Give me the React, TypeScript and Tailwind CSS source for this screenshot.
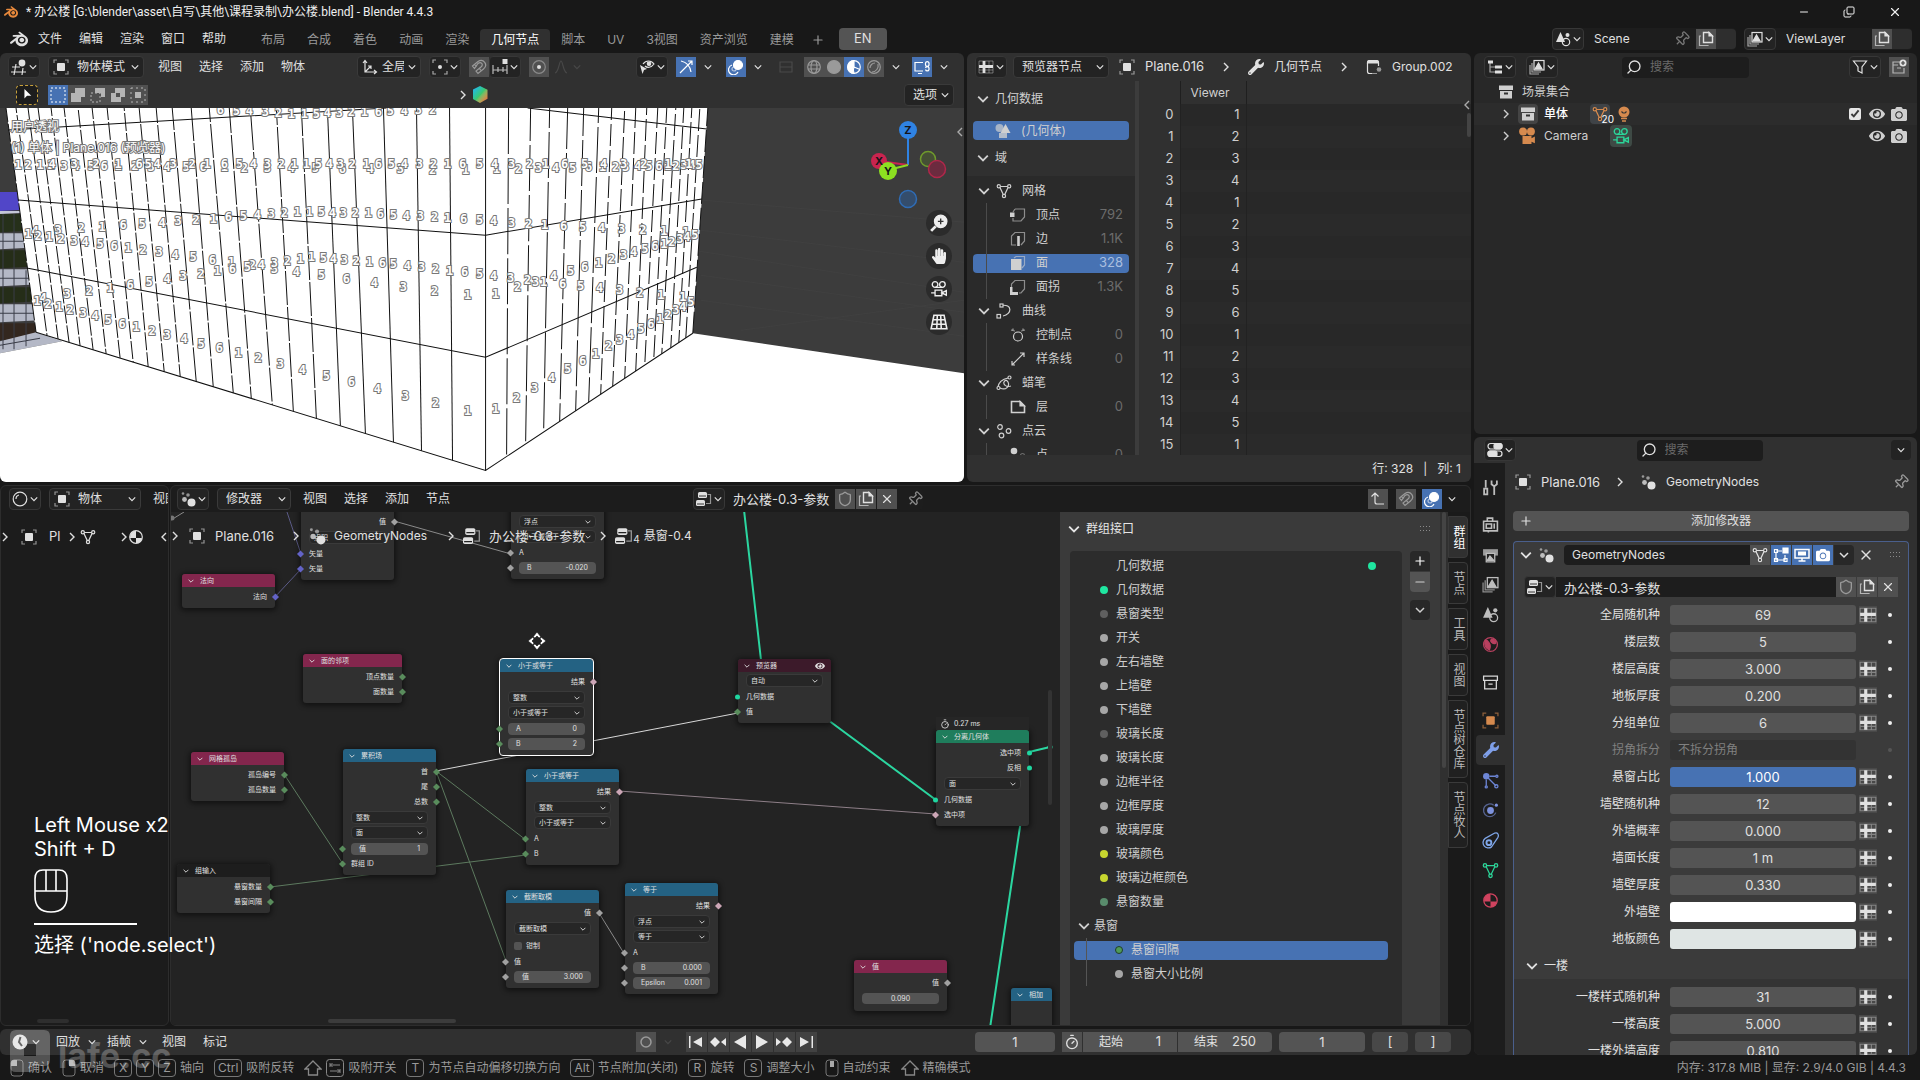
import type { ReactNode } from "react";
import { Copy, Minus, Pin, Plus, Search, Shield, Timer, X } from "lucide-react";
import { FaCamera, FaEye, FaHandPaper, FaWrench } from "react-icons/fa";
import { SiBlender } from "react-icons/si";

/* ---------- icons ---------- */

const shapes: Record<string, ReactNode> = {
  object: (
    <>
      <rect x="4" y="4" width="8" height="8" rx="1" fill="currentColor" stroke="none" />
      <path d="M1 4V1h3M12 1h3v3M15 12v3h-3M4 15H1v-3" opacity=".6" />
    </>
  ),
  view3d: (
    <>
      <circle cx="11" cy="4" r="3.4" fill="currentColor" stroke="none" />
      <path d="M1 8h8M0 13h15M5 5 3 16M12 9l-1 7" />
    </>
  ),
  sheet: (
    <>
      <path d="M1 2h14v12H1zM1 11h14M11 2v12" strokeWidth="1" opacity=".4" />
      <path d="M1 7.500h14M6 2v12" strokeWidth="2.8" />
    </>
  ),
  outliner: (
    <>
      <path d="M3 4v9h5M3 8h5" opacity=".7" />
      <path d="M1 1.500h5v3H1zM8 6.500h7v3H8zM8 11.500h7v3H8z" fill="currentColor" stroke="none" />
    </>
  ),
  props: (
    <>
      <rect x="1" y="1.500" width="14" height="5.500" rx="2.700" />
      <rect x="1" y="9" width="14" height="5.500" rx="2.700" />
      <rect x="7" y="1.500" width="8" height="5.500" rx="2" fill="currentColor" />
      <rect x="1" y="9" width="9" height="5.500" rx="2" fill="currentColor" />
    </>
  ),
  geonodes: (
    <g fill="currentColor" stroke="none">
      <circle cx="11.500" cy="11.500" r="4" />
      <circle cx="4.500" cy="8.500" r="2.400" opacity=".8" />
      <circle cx="8" cy="4" r="1.800" opacity=".6" />
      <circle cx="3" cy="2.500" r="1.300" opacity=".6" />
    </g>
  ),
  nodetree: (
    <>
      <rect x="2" y="1" width="9" height="6" rx="1.500" fill="currentColor" stroke="none" />
      <rect x="0" y="9" width="9" height="6" rx="1.500" fill="currentColor" stroke="none" />
      <path d="M11.500 3.500h3v9H10" opacity=".6" />
      <path d="M3 5h7M1 13h7" stroke="#222" strokeWidth=".9" />
    </>
  ),
  mesh: (
    <>
      <path d="M3.500 3.500h9L8 13z" />
      <g fill="#2b2b2b">
        <circle cx="2.800" cy="3.200" r="1.600" />
        <circle cx="13.200" cy="3.200" r="1.600" />
        <circle cx="8" cy="13" r="1.600" />
      </g>
    </>
  ),
  material: (
    <>
      <circle cx="8" cy="8" r="6.300" />
      <path d="M8 1.700A6.300 6.300 0 0 0 2 9h6zM8 9h6a6.300 6.300 0 0 1-6 5.300z" fill="currentColor" stroke="none" />
    </>
  ),
  axes: <path d="M3 2v11h11M3 13l6-6M1 4l2-2.500L5 4M12 11l2.500 2-2.500 2M6 7h3v3" />,
  pivot: (
    <>
      <circle cx="8" cy="8" r="2" fill="currentColor" stroke="none" />
      <path d="M1 4V1h3M12 1h3v3M15 12v3h-3M4 15H1v-3" opacity=".7" />
    </>
  ),
  magnet: <path d="M1.500 7 7 2.500C12.500-1 17.500 6 12.500 10L7 14.500 5 12l5-4c3-2.500 0-6-3-3.500L3.500 9.500zM3.500 5.500l2 2.500M8.500 9.500l2 2.500" />,
  dupe: (
    <>
      <path d="M5.500 1.500H11L14.500 5v6.500h-9z" strokeWidth="1.400" />
      <path d="M11 1.500V5h3.500z" fill="currentColor" />
      <path d="M3 5H1.500v9.500h8.500V14" opacity=".7" />
    </>
  ),
  snapto: (
    <>
      <path d="M1 6v9M6 8v5M11 8v5M15 6v9M1 11h14" opacity=".8" />
      <rect x="10.500" y="0" width="5" height="5" fill="currentColor" stroke="none" />
    </>
  ),
  propedit: (
    <>
      <circle cx="8" cy="8" r="6.300" opacity=".4" />
      <circle cx="8" cy="8" r="2" fill="currentColor" stroke="none" />
    </>
  ),
  falloff: <path d="M2 14C6 13 6 2 8 2s2 11 6 12" />,
  visible: (
    <>
      <path d="M4 5c3-4 8-4 11 0-3 4-7 4-9 2" />
      <circle cx="10" cy="4.800" r="1.700" fill="currentColor" />
      <path d="m1 6 7 4-3 1-1.500 4z" fill="currentColor" stroke="none" />
    </>
  ),
  gizmo: <path d="M3 2c5 1 9 5 10 11M2 14 14 2M10 2h4v4" />,
  overlay: (
    <>
      <circle cx="10" cy="6" r="4.500" fill="currentColor" />
      <path d="M4 6a5 5 0 1 0 6 7" />
      <circle cx="6" cy="10" r="2" opacity=".6" />
    </>
  ),
  xray: <path d="M2 3h12v10H2zM2 8h12" opacity=".15" />,
  wire: (
    <>
      <circle cx="8" cy="8" r="6.300" />
      <ellipse cx="8" cy="8" rx="3" ry="6.300" />
      <path d="M2 6h12M2 10h12" />
    </>
  ),
  solid: <circle cx="8" cy="8" r="6.500" fill="currentColor" />,
  preview: (
    <>
      <circle cx="8" cy="8" r="6.300" />
      <path d="M8 1.700A6.300 6.300 0 0 0 8 14.300c-1-2-1-4 0-6.300zM8 8l6 2.500" fill="currentColor" />
    </>
  ),
  render: (
    <>
      <circle cx="8" cy="8" r="6.300" />
      <path d="M4 9a5 5 0 0 1 5-5M12 5c1 4-2 8-6 8" />
    </>
  ),
  compositor: (
    <>
      <path d="M9 3.500H1v8.500h8M4 14.500h4" />
      <path d="M11.500 6V4a1.800 1.800 0 0 1 3.500 0v2a1.800 1.800 0 0 1-3.500 0M11.500 9a1.800 1.800 0 0 1 3.500 0v1.500a1.800 1.800 0 0 1-3.500 0" />
    </>
  ),
  scene: (
    <>
      <path d="M5.500 1 10 11H1z" fill="currentColor" stroke="none" />
      <circle cx="12.500" cy="4" r="2" fill="currentColor" stroke="none" />
      <circle cx="11" cy="11" r="3.700" />
    </>
  ),
  viewlayer: (
    <>
      <rect x="5" y="1.500" width="10" height="9.500" />
      <path d="m6 10 3.500-6 3.500 6z" fill="currentColor" />
      <path d="M3 4v9h9M1 6v9h9" opacity=".7" />
    </>
  ),
  newcol: (
    <>
      <path d="M9 3H2v11h11V9M2 6h5M6 9h4" opacity=".7" />
      <circle cx="12" cy="4" r="3.500" fill="currentColor" stroke="none" />
      <path d="M12 2v4M10 4h4" stroke="#444" />
    </>
  ),
  filter: <path d="M1.500 2h13L10 8v6l-4-2V8z" />,
  collection: (
    <>
      <path d="M1 1.500h14V6H1zM2 7h12v7.500H2z" fill="currentColor" stroke="none" />
      <path d="M6 9.500h4" stroke="#333" strokeWidth="2" />
    </>
  ),
  collectionLine: <path d="M1.500 2h13v4h-13zM2.500 6v8h11V6M6 9.500h4" />,
  moviecam: (
    <g fill="currentColor" stroke="none">
      <circle cx="4.500" cy="4" r="3.500" />
      <circle cx="11.500" cy="4" r="3.500" />
      <path d="M4 8h8v2l3-1.500v6L12 13v2H4z" />
    </g>
  ),
  camera: (
    <>
      <circle cx="4.500" cy="4" r="2.500" />
      <circle cx="11" cy="4" r="2.500" />
      <path d="M4.500 9h6v5h-6zM10.500 11.500l4-2v4zM1 11.500h3.500M4.500 6.500H11" />
    </>
  ),
  bulb: (
    <>
      <circle cx="8" cy="6" r="5.500" fill="currentColor" stroke="none" />
      <path d="M5 12.500h6M6 15h4" strokeWidth="1.600" />
      <path d="M5.500 5.500 7 7h2l1.500-1.500" stroke="#333" />
    </>
  ),
  geometry: (
    <g fill="currentColor" stroke="none">
      <circle cx="4.500" cy="5" r="4" opacity=".7" />
      <path d="m10.500 1 5 9h-10z" />
      <path d="M4 10h8v5H4z" opacity=".8" />
    </g>
  ),
  modout: (
    <>
      <path d="M6 14.500H3.500q-2 0-2-2V4q0-2.500 2-2.500h7q2 0 2 2V7" />
      <path d="M1.500 4q0-2.500 2-2.500h7q2 0 2 2.500z" fill="currentColor" />
      <circle cx="13" cy="10.500" r="2.300" fill="#999" stroke="none" />
      <path d="M6 14.500h5" opacity=".6" />
    </>
  ),
  vert: (
    <>
      <path d="M5 2h9.500v8L11 14H3v-3M3 5l2-3" opacity=".6" />
      <rect x="0" y="5.500" width="4.500" height="4.500" fill="currentColor" stroke="none" />
    </>
  ),
  edge: (
    <>
      <path d="M6 14H1.500V5L5 1.500h9.500v8.500L11 14" opacity=".6" />
      <path d="M8.500 5v10" strokeWidth="2.600" />
    </>
  ),
  face: (
    <>
      <path d="M4 3 6 1.500h8.500V10L12 13" opacity=".6" />
      <rect x="1" y="4" width="10.500" height="11" fill="currentColor" stroke="none" />
    </>
  ),
  facecorner: (
    <>
      <path d="M1.500 8V5L5 1.500h9.500V10L11 14H9" opacity=".6" />
      <path d="M1 8v6.500h7" strokeWidth="3" />
    </>
  ),
  curve: (
    <>
      <path d="M5 2.500c12-2 11 9 2 10.500" />
      <rect x="4" y="1" width="3" height="3" fill="#222" />
      <rect x="1" y="11.500" width="3.500" height="3.500" fill="#222" />
    </>
  ),
  ctrl: (
    <>
      <circle cx="8" cy="9.500" r="4.500" />
      <path d="m1 3 4 1M15 3l-4 1M3 1.500v2M13 1.500v2" opacity=".7" />
    </>
  ),
  spline: <path d="M2 14 14 2M10 2h4v4M2 10v4h3" />,
  gpencil: (
    <>
      <path d="M2 12c1-6 5-8 10-9M4 13c6 3 10-2 8-6s-5 0-4 2 4 3 7 2" />
      <circle cx="13.500" cy="2.500" r="1.500" fill="#222" />
      <circle cx="2.500" cy="13" r="1.500" fill="#222" />
    </>
  ),
  layer: (
    <>
      <path d="M1.500 2.500H10l4.500 4.500v6.500h-13z" strokeWidth="1.600" />
      <path d="M10 2.500V7h4.500z" fill="currentColor" />
    </>
  ),
  cloud: (
    <>
      <circle cx="4" cy="4" r="2.300" />
      <circle cx="12.500" cy="8" r="2.300" />
      <circle cx="5.500" cy="12.500" r="2.300" />
    </>
  ),
  point: (
    <>
      <circle cx="4" cy="4" r="3.300" fill="currentColor" stroke="none" />
      <circle cx="12.500" cy="8.500" r="2" opacity=".4" />
    </>
  ),
  tool: <path d="M3.500 1v7M2 9h3v5.500H2zM9 1.500v3.500l2.500 2 2.500-2V1.500M11.500 7v8" strokeWidth="1.700" />,
  renderprops: <path d="M1.500 5h13v9h-13zM5 5V2h5v3M4 7.500h5v4H4zM11.500 7v5M6 14v1.500" strokeWidth="1.500" />,
  output: (
    <>
      <path d="M1 3h14v6H1z" fill="currentColor" stroke="none" opacity=".8" />
      <path d="M4 7h8v8H4z" fill="#222" />
      <path d="m5 13.500 2.500-4 3.500 4z" fill="currentColor" />
    </>
  ),
  world: (
    <>
      <circle cx="8" cy="8" r="6.500" />
      <path d="M3 4c3 0 3 2 4 3s1 4 0 6c-3-1-5-4-4-9zM9 3c2 0 4 1 4 3s-3 1-4 0-1-2 0-3z" fill="currentColor" />
    </>
  ),
  particles: (
    <>
      <circle cx="4" cy="4" r="3" fill="currentColor" stroke="none" />
      <path d="M5 5l8 8M7 4h6M4 7v6" />
      <circle cx="14" cy="4" r="1" />
      <circle cx="4" cy="14" r="1" />
      <circle cx="13.500" cy="13.500" r="1.500" />
    </>
  ),
  physics: (
    <>
      <circle cx="8" cy="8" r="3.200" fill="currentColor" stroke="none" />
      <path d="M13 10a6 6 0 1 1-2-7" opacity=".6" />
      <circle cx="13.500" cy="3" r="1.500" fill="currentColor" stroke="none" />
    </>
  ),
  constraint: (
    <>
      <path d="M9 14A5 5 0 1 1 3 6l9-5c3-1 4 2 3 4z" />
      <circle cx="6.500" cy="10" r="2.300" strokeWidth="1.800" />
    </>
  ),
  cage: (
    <>
      <path d="M3 5v8h9V8M3 4h6" />
      <path d="M1.500 2.500h3v3h-3zM1.500 11.500h3v3h-3zM11 11.500h3v3h-3z" />
      <path d="M10 1h5v5h-5z" fill="currentColor" />
    </>
  ),
  monitor: (
    <>
      <path d="M1 2.500h14v8.500H1zM8 11v3M4.500 14h7" strokeWidth="1.500" />
      <path d="M4 4.500h8v4H4z" fill="currentColor" stroke="none" />
    </>
  ),
  zoom: (
    <>
      <circle cx="9.500" cy="6.500" r="5.500" fill="currentColor" />
      <path d="m5 11-4 4" strokeWidth="2.500" />
      <path d="M9.500 4v5M7 6.500h5" stroke="#333" />
    </>
  ),
  persp: <path d="M3.500 2h9L15 14H1zM2.500 6h11M2 10h12M6.500 2 6 14M9.500 2l.5 12" strokeWidth="1.400" />,
  parent: <path d="M5 2v9q0 2 2 2h7M1.500 5.500 5 2l3.500 3.500" />,
  clock: (
    <>
      <circle cx="8" cy="8" r="7.500" fill="currentColor" stroke="none" />
      <path d="M8.500 3 7 8l3 4" stroke="#333" strokeWidth="2" />
    </>
  ),
  sphere: (
    <>
      <circle cx="8" cy="8" r="6.800" />
      <path d="M4 8a4 4 0 0 1 3-4" />
    </>
  ),
};

function Ic({ n, className = "size-4" }: { n: string; className?: string }) {
  return (
    <svg viewBox="0 0 16 16" fill="none" stroke="currentColor" strokeWidth="1.2" className={`shrink-0 ${className}`}>
      {shapes[n]}
    </svg>
  );
}

function Chev({ className = "size-2" }: { className?: string }) {
  return (
    <svg viewBox="0 0 10 10" fill="none" stroke="currentColor" strokeWidth="1.5" className={`pointer-events-none shrink-0 ${className}`}>
      <path d="M1 3l4 4 4-4" />
    </svg>
  );
}

function Arrow() {
  return (
    <svg viewBox="0 0 8 12" fill="none" stroke="currentColor" strokeWidth="1.4" className="h-3 w-2 shrink-0">
      <path d="M2 2l4 4-4 4" />
    </svg>
  );
}

/* ---------- small controls ---------- */

function Btn({ label, on, dim, flat, children }: { label: string; on?: boolean; dim?: boolean; flat?: boolean; children: ReactNode }) {
  const tone = on ? "bg-[#4772b3] text-white" : flat ? "" : "bg-[#505050]";
  return (
    <button aria-label={label} className={`grid h-5 w-5 shrink-0 place-items-center ${tone} ${dim ? "text-[#9a9a9a]" : ""}`}>
      {children}
    </button>
  );
}

function Drop({ label, children }: { label: string; children: ReactNode }) {
  return (
    <button aria-label={label} className="flex h-[22px] shrink-0 items-center gap-0.5 rounded-sm border border-[#373737] bg-[#232323] px-0.5">
      {children}
      <Chev />
    </button>
  );
}

function Pick({ label, value, className, children }: { label: string; value: string; className?: string; children?: ReactNode }) {
  return (
    <label className={`flex h-[22px] shrink-0 items-center gap-1 rounded-sm border border-[#3a3a3a] bg-[#232323] pr-1 ${children ? "pl-1" : "pl-2"} ${className ?? ""}`}>
      {children}
      <select aria-label={label} className="min-w-0 flex-1 appearance-none bg-transparent outline-none">
        <option>{value}</option>
      </select>
      <Chev />
    </label>
  );
}

function Menus({ items }: { items: string[] }) {
  return (
    <nav className="flex shrink-0 items-center gap-[17px] whitespace-nowrap">
      {items.map((m) => (
        <button key={m}>{m}</button>
      ))}
    </nav>
  );
}

function DotGrip() {
  return (
    <svg viewBox="0 0 12 6" className="h-1.5 w-3" fill="#8a8a8a">
      {[0, 3, 6, 9].map((x) => (
        <g key={x}>
          <rect x={x} y="0" width="1" height="1" />
          <rect x={x} y="4" width="1" height="1" />
        </g>
      ))}
    </svg>
  );
}

/* ---------- top ---------- */

function TitleBar() {
  return (
    <header className="flex h-6 shrink-0 items-center gap-2 px-1 text-[#f0f0f0]">
      <SiBlender className="size-3.5 text-[#e98a3c]" />
      <span className="font-['Roboto','Noto_Sans_CJK_SC',sans-serif] text-xs whitespace-nowrap">
        * 办公楼 [G:\blender\asset\自写\其他\课程录制\办公楼.blend] - Blender 4.4.3
      </span>
      <div className="ml-auto flex items-center gap-[33px] pr-3.5">
        <button aria-label="最小化"><Minus className="size-3" /></button>
        <button aria-label="还原"><Copy className="size-3 -scale-x-100 rotate-180" /></button>
        <button aria-label="关闭"><X className="size-3.5" /></button>
      </div>
    </header>
  );
}

const tabs = ["布局", "合成", "着色", "动画", "渲染", "几何节点", "脚本", "UV", "3视图", "资产浏览", "建模"];

function TopBar() {
  return (
    <div className="flex h-[29px] shrink-0 items-center pr-2 pl-2.5">
      <SiBlender className="mr-2.5 size-[18px]" />
      <Menus items={["文件", "编辑", "渲染", "窗口", "帮助"]} />
      <div className="mb-[3px] ml-6 flex items-center self-end text-[#9a9a9a]">
        {tabs.map((t, i) => (
          <button
            key={i}
            className={`h-[21px] rounded-t px-[11px] whitespace-nowrap ${t === "几何节点" ? "bg-[#303030] text-white" : ""}`}
          >
            {t}
          </button>
        ))}
        <button aria-label="添加工作区" className="px-1.5"><Plus className="size-3.5" /></button>
      </div>
      <button className="ml-2 h-[22px] w-12 rounded bg-[#545454] text-[13px]">EN</button>
      <div className="ml-auto flex items-center gap-2">
        <div className="flex h-[22px] items-center rounded bg-[#1d1d1d]">
          <Drop label="浏览场景"><Ic n="scene" /></Drop>
          <input aria-label="场景" defaultValue="Scene" className="w-[90px] bg-transparent pl-2.5 outline-none" />
          <Pin className="mr-1.5 size-4 rotate-45 text-[#777]" />
          <Btn label="新建场景"><Ic n="dupe" /></Btn>
          <span className="h-5 w-5 rounded-r bg-[#2e2e2e]" />
        </div>
        <div className="flex h-[22px] items-center rounded bg-[#1d1d1d]">
          <Drop label="浏览视图层"><Ic n="viewlayer" /></Drop>
          <input aria-label="视图层" defaultValue="ViewLayer" className="w-[96px] bg-transparent pl-2.5 outline-none" />
          <Btn label="新建视图层"><Ic n="dupe" /></Btn>
          <span className="h-5 w-5 rounded-r bg-[#2e2e2e]" />
        </div>
      </div>
    </div>
  );
}

/* ---------- 3D viewport ---------- */

type Pt = [number, number];

function yAt(curve: Pt[], x: number) {
  for (let i = 1; i < curve.length; i++) {
    const [x0, y0] = curve[i - 1];
    const [x1, y1] = curve[i];
    if (x <= x1) return y0 + ((x - x0) * (y1 - y0)) / (x1 - x0);
  }
  return curve[curve.length - 1][1];
}

const lower = "12123456123456123456432112345612345612345";
const upper = "43216543216543211543216543216543216543211";

// face ids drawn over the mesh, one entry per floor row
const idRows: { ids: string; xs: number[]; curve: Pt[] }[] = [
  {
    ids: "65432115432165432",
    xs: [220, 236, 249, 265, 278, 291, 304, 316, 327, 339, 351, 364, 378, 390, 404, 418, 432],
    curve: [[220, 110], [300, 114], [432, 110]],
  },
  {
    ids: lower,
    xs: [18, 28, 40, 51, 64, 76, 91, 104, 118, 135, 151, 167, 186, 203, 224, 244, 267, 291, 315, 342, 370, 400, 432, 465, 496, 518, 538, 555, 572, 588, 602, 615, 625, 637, 648, 658, 667, 675, 683, 691, 698],
    curve: [[18, 165], [465, 170], [698, 165]],
  },
  {
    ids: upper,
    xs: [52, 74, 96, 118, 139, 148, 157, 173, 192, 207, 224, 239, 253, 267, 281, 294, 306, 318, 329, 340, 352, 366, 378, 391, 404, 419, 433, 447, 462, 479, 494, 511, 529, 545, 564, 584, 603, 623, 643, 667, 688],
    curve: [[52, 164], [688, 164]],
  },
  {
    ids: upper,
    xs: [35, 58, 81, 102, 123, 142, 162, 178, 196, 213, 228, 243, 257, 271, 284, 297, 309, 321, 332, 343, 355, 368, 380, 393, 406, 420, 434, 447, 463, 479, 493, 511, 528, 544, 563, 582, 601, 621, 642, 663, 685],
    curve: [[35, 231], [142, 224], [297, 212], [368, 213], [479, 220], [544, 225], [685, 232]],
  },
  {
    ids: lower,
    xs: [28, 38, 49, 61, 74, 85, 100, 114, 128, 143, 159, 175, 193, 212, 231, 252, 274, 296, 321, 346, 374, 403, 434, 467, 495, 517, 535, 553, 570, 584, 598, 611, 623, 633, 644, 654, 663, 671, 679, 686, 694],
    curve: [[28, 234], [128, 248], [231, 262], [346, 279], [467, 295], [495, 294], [570, 271], [633, 252], [694, 235]],
  },
  {
    ids: upper,
    xs: [43, 67, 89, 110, 130, 149, 167, 183, 201, 217, 232, 247, 261, 274, 287, 300, 311, 323, 333, 344, 356, 369, 382, 393, 407, 421, 435, 449, 464, 479, 493, 510, 527, 543, 562, 580, 599, 619, 639, 660, 682],
    curve: [[43, 298], [217, 271], [311, 257], [393, 264], [479, 274], [543, 282], [682, 297]],
  },
  {
    ids: lower,
    xs: [37, 48, 59, 70, 83, 95, 108, 122, 136, 152, 167, 184, 201, 219, 238, 258, 280, 302, 326, 351, 377, 405, 435, 467, 495, 516, 534, 551, 567, 582, 595, 608, 619, 630, 640, 650, 659, 667, 675, 682, 690],
    curve: [[37, 301], [136, 327], [238, 353], [351, 382], [467, 411], [495, 409], [551, 378], [608, 346], [640, 329], [690, 302]],
  },
];

const leftTop = [485, 449, 416, 383, 352, 327, 301, 276, 250, 229, 209, 191, 172, 156, 139, 124, 107, 92, 78, 64, 51, 38, 28, 16, 6];
const leftBottom = [485, 452, 421, 393, 365, 340, 316, 293, 272, 251, 233, 213, 196, 180, 164, 148, 133, 120, 106, 93, 80, 69, 58, 47, 36];
const rightTop = [508, 530, 549, 567, 583, 598, 611, 624, 635, 646, 657, 666, 675, 683, 691, 699, 707];
const rightBottom = [506, 525, 543, 559, 575, 588, 600, 612, 624, 635, 644, 653, 661, 670, 678, 685, 692];
const base: Pt[] = [[36, 332], [485, 470], [692, 333]];

const bands: [number, number, string][] = [
  [192, 211, "#5146c8"],
  [211, 214, "#c4c7d6"],
  [214, 232, "#26301a"],
  [233, 249, "#b4b8c6"],
  [250, 268, "#252d18"],
  [269, 286, "#b4b8c6"],
  [287, 303, "#252d18"],
  [304, 322, "#b4b8c6"],
  [323, 340, "#33271f"],
];

function Scene3D() {
  return (
    <svg viewBox="0 108 963 374" preserveAspectRatio="xMinYMin slice" className="absolute inset-0 size-full">
      <rect x="0" y="108" width="1200" height="500" fill="#3c3c3c" />
      <g stroke="#404040" strokeWidth="1">
        <path d="M692 250 963 292M700 300 963 336M700 230 963 262M740 330 963 300M700 200 963 222M700 275 963 312" />
      </g>
      {bands.map(([y0, y1, c]) => (
        <path key={y0} d={`M0 ${y0}H40V${y1 - 2}L0 ${y1}z`} fill={c} />
      ))}
      <path d="M0 341 40 331 62 341 0 353z" fill="#b4b8c6" />
      <path d="M3 214v135M14 214v135M26 270v76M0 241h26M0 278h30M0 313h34M0 345l40-7" stroke="#3a3d48" fill="none" />
      <path d="M0 353 62 341 36 332 692 333 1200 408V700H0z" fill="#fff" />
      <path d="M6 108H707L692 333 485 470 36 332z" fill="#fff" />
      <g stroke="#111" strokeWidth="1" fill="none">
        <path d="M8 130 386 108M527 108 706 129M18 200 485 235 701 199M28 268 485 357 696 267M36 332 485 470 692 333" />
        {leftTop.map((x, i) => (
          <path
            key={x}
            d={`M${x} 108L${leftBottom[i]} ${yAt(base, leftBottom[i])}`}
            strokeDasharray={i < 6 ? undefined : i < 13 ? "34 2" : "18 2"}
            strokeDashoffset={(i * 11) % 30}
          />
        ))}
        {rightTop.map((x, i) => (
          <path
            key={x}
            d={`M${x} 108L${rightBottom[i]} ${yAt(base, rightBottom[i])}`}
            strokeDasharray={i < 6 ? "46 4" : "22 4"}
            strokeDashoffset={(i * 13) % 34}
          />
        ))}
      </g>
      <g fill="#fff" stroke="#777" strokeWidth="2" paintOrder="stroke" className="font-['DejaVu_Sans_Mono',monospace] text-[12px] font-bold" textAnchor="middle">
        {idRows.map((r, k) =>
          r.xs.map((x, i) => (
            <text key={`${k}-${i}`} x={x} y={yAt(r.curve, x) + 4}>
              {r.ids[i]}
            </text>
          ))
        )}
      </g>
      <g fill="#fff" stroke="#777" strokeWidth="2" paintOrder="stroke" className="text-[12px]">
        <text x="11" y="131">用户透视</text>
        <text x="11" y="152">(1) 单体 | Plane.016 (预览器)</text>
      </g>
    </svg>
  );
}

function AxisGizmo() {
  return (
    <svg viewBox="0 0 90 100" className="h-[100px] w-[90px]">
      <path d="M50 55V20" stroke="#2f83e3" strokeWidth="2" />
      <path d="M50 55 21 51" stroke="#c9244f" strokeWidth="2" />
      <path d="M50 55 30 60" stroke="#8cd822" strokeWidth="2" />
      <circle cx="70" cy="49" r="7.500" fill="#454f35" stroke="#6f9a2c" strokeWidth="1.500" />
      <circle cx="79" cy="59" r="8.500" fill="#6c2b3f" stroke="#b0274a" strokeWidth="1.500" />
      <circle cx="50" cy="89" r="8.500" fill="#344d6c" stroke="#2f6cb5" strokeWidth="1.500" />
      <circle cx="21" cy="51" r="8" fill="#c9244f" />
      <circle cx="30" cy="61" r="9" fill="#8ce021" />
      <circle cx="50" cy="20" r="9" fill="#2f83e3" />
      <g className="text-[11px] font-bold" textAnchor="middle" fill="#15151a">
        <text x="50" y="24">Z</text>
        <text x="21" y="55">X</text>
        <text x="30" y="65">Y</text>
      </g>
    </svg>
  );
}

function Viewport() {
  const round = "grid size-[26px] place-items-center rounded-full bg-[#2b2b2b]";
  return (
    <section className="flex min-w-0 flex-1 flex-col overflow-hidden rounded-md bg-[#303030]">
      <div className="flex h-7 shrink-0 items-center px-2">
        <Drop label="编辑器类型"><Ic n="view3d" /></Drop>
        <Pick label="模式" value="物体模式" className="mr-3.5 ml-2 w-24"><Ic n="object" className="mr-1 size-4" /></Pick>
        <Menus items={["视图", "选择", "添加", "物体"]} />
        <div className="ml-[52px] flex items-center gap-2">
          <Pick label="坐标系" value="全局" className="w-16"><Ic n="axes" /></Pick>
          <Drop label="轴心点"><Ic n="pivot" /></Drop>
          <div className="flex items-center">
            <Btn label="吸附" dim><Ic n="magnet" /></Btn>
            <Drop label="吸附至"><Ic n="snapto" /></Drop>
          </div>
          <div className="flex items-center">
            <Btn label="衰减编辑"><Ic n="propedit" /></Btn>
            <span className="flex items-center gap-1 pl-1 text-[#484848]"><Ic n="falloff" /><Chev /></span>
          </div>
        </div>
        <div className="ml-auto flex items-center gap-2 pr-2">
          <div className="-mr-1 pr-1"><Drop label="可见性"><Ic n="visible" /></Drop></div>
          <div className="flex items-center gap-2"><Btn label="Gizmo" on><Ic n="gizmo" /></Btn><Chev /></div>
          <div className="ml-1.5 flex items-center gap-2"><Btn label="叠加层" on><Ic n="overlay" /></Btn><Chev /></div>
          <div className="ml-1.5 flex items-center"><Btn label="透视" flat><Ic n="xray" /></Btn></div>
          <div className="flex items-center">
            <Btn label="线框" dim><Ic n="wire" /></Btn>
            <Btn label="实体" dim><Ic n="solid" /></Btn>
            <Btn label="材质预览" on><Ic n="preview" /></Btn>
            <Btn label="渲染" dim><Ic n="render" /></Btn>
          </div>
          <Chev />
          <div className="ml-1 flex items-center gap-2"><Btn label="合成器" on><Ic n="compositor" /></Btn><Chev /></div>
        </div>
      </div>
      <div className="flex h-[27px] shrink-0 items-center pr-2.5 pl-4">
        <div className="flex flex-1 items-center gap-2.5">
          <button aria-label="框选" className="grid h-5 w-[22px] place-items-center rounded-sm border border-dashed border-[#c8a13c] bg-[#1d1d1d]">
            <svg viewBox="0 0 10 14" className="h-3 w-2.5" fill="#fff"><path d="M2 0v11l3-3h5z" /></svg>
          </button>
          <div className="flex text-[#b5b5b5]">
            <Btn label="新建选择" on>
              <svg viewBox="0 0 16 16" className="size-4"><path d="M1 1h14v14H1z" fill="none" stroke="#fff" strokeDasharray="2 2" /></svg>
            </Btn>
            <Btn label="扩展"><svg viewBox="0 0 16 16" className="size-4" fill="currentColor"><path d="M5 1h10v9h-4v5H1V6h4z" /></svg></Btn>
            <Btn label="减去"><svg viewBox="0 0 16 16" className="size-4" fill="currentColor"><path d="M5 1h10v9h-4V6H5z" /><path d="M1 6h9v9H1z" fill="none" stroke="currentColor" strokeDasharray="2 2" /></svg></Btn>
            <Btn label="反转"><svg viewBox="0 0 16 16" className="size-4" fill="currentColor" fillRule="evenodd"><path d="M5 1h10v9h-4v5H1V6h4zM6 6v4h4V6z" /></svg></Btn>
            <Btn label="相交"><svg viewBox="0 0 16 16" className="size-4" fill="currentColor"><path d="M5 5h6v6H5z" /><path d="M1 1h14v14H1z" fill="none" stroke="currentColor" strokeDasharray="2 3" /></svg></Btn>
          </div>
        </div>
        <div className="mr-6 flex items-center gap-1.5">
          <Arrow />
          <span className="h-[17px] w-[15px] bg-linear-to-br from-[#2bb0ff] via-[#3bc96d] to-[#ff3a2e] [clip-path:polygon(50%_0,100%_22%,100%_75%,50%_100%,0_75%,0_22%)]" />
        </div>
        <div className="flex flex-1 justify-end">
          <Pick label="选项" value="选项" className="w-[50px]" />
        </div>
      </div>
      <div className="relative min-h-0 flex-1">
        <Scene3D />
        <div className="absolute top-0.5 right-2 flex flex-col items-end">
          <div className="mr-2"><AxisGizmo /></div>
          <div className="mr-1 flex flex-col gap-[7px] text-[#eee]">
            <button aria-label="缩放" className={round}><Ic n="zoom" className="size-[18px]" /></button>
            <button aria-label="平移" className={round}><FaHandPaper className="size-4" /></button>
            <button aria-label="摄像机视图" className={round}><Ic n="camera" className="size-[18px]" /></button>
            <button aria-label="透视视图" className={round}><Ic n="persp" className="size-[18px]" /></button>
          </div>
        </div>
        <div className="absolute top-[18px] right-0 rotate-180 text-[#aaa]"><Arrow /></div>
      </div>
    </section>
  );
}

/* ---------- spreadsheet ---------- */

const domains: { icon: string; name: string; kids: [string, string, string][] }[] = [
  { icon: "mesh", name: "网格", kids: [["vert", "顶点", "792"], ["edge", "边", "1.1K"], ["face", "面", "328"], ["facecorner", "面拐", "1.3K"]] },
  { icon: "curve", name: "曲线", kids: [["ctrl", "控制点", "0"], ["spline", "样条线", "0"]] },
  { icon: "gpencil", name: "蜡笔", kids: [["layer", "层", "0"]] },
  { icon: "cloud", name: "点云", kids: [["point", "点", "0"]] },
];

const viewer = [1, 2, 3, 4, 1, 2, 3, 4, 5, 6, 1, 2, 3, 4, 5, 1];

function Spreadsheet() {
  return (
    <section className="flex w-[504px] shrink-0 flex-col overflow-hidden rounded-md bg-[#303030]">
      <div className="flex h-7 shrink-0 items-center gap-2.5 pl-2 whitespace-nowrap">
        <Drop label="编辑器类型"><Ic n="sheet" /></Drop>
        <Pick label="对象" value="预览器节点" className="-ml-1 w-24" />
        <Ic n="object" />
        <span className="text-[13px]">Plane.016</span>
        <span className="mx-2"><Arrow /></span>
        <FaWrench className="size-4 shrink-0" />
        <span>几何节点</span>
        <span className="mx-2"><Arrow /></span>
        <Ic n="modout" />
        <span>Group.002</span>
      </div>
      <div className="flex min-h-0 flex-1 overflow-hidden">
        <aside className="w-[172px] shrink-0 overflow-hidden border-r-4 border-[#3c3c3c] px-1.5 text-[#d0d0d0]">
          <button className="flex h-9 items-center gap-1.5 pl-1"><Chev className="size-3" />几何数据</button>
          <button className="mt-1 flex h-[19px] w-full items-center gap-2.5 rounded bg-[#4772b3] pl-[22px]"><Ic n="geometry" />(几何体)</button>
          <button className="flex h-9 items-center gap-1.5 pl-1"><Chev className="size-3" />域</button>
          <div className="-mx-1.5 bg-[#2a2a2a] px-1.5 pt-[3px]">
            {domains.map((d) => (
              <div key={d.name}>
                <button className="flex h-6 items-center gap-1 pl-[5px]"><Chev className="mr-0.5 size-3" /><Ic n={d.icon} /><span className="ml-1.5">{d.name}</span></button>
                <div className="relative">
                  {d.kids.map(([icon, name, n]) => (
                    <div key={name} className="flex h-6 items-center">
                      <button className={`flex h-[19px] w-full items-center gap-2.5 rounded pr-1.5 pl-[37px] ${name === "面" ? "bg-[#4772b3]" : ""}`}>
                        <Ic n={icon} />
                        {name}
                        <span className={`ml-auto text-[13px] ${name === "面" ? "text-[#a9bedf]" : "text-[#6c6c6c]"}`}>{n}</span>
                      </button>
                    </div>
                  ))}
                  <div className="absolute inset-y-0 left-[13px] w-px bg-[#4b4b4b]" />
                </div>
              </div>
            ))}
          </div>
        </aside>
        <div className="relative min-w-0 flex-1 overflow-hidden bg-[#2a2a2a] text-[13px] text-[#cfcfcf]">
          <table className="w-full table-fixed border-collapse">
            <thead>
              <tr className="h-[23px] bg-[#303030]">
                <th className="w-[41px] border-r border-[#1f1f1f]" />
                <th className="w-[66px] border-r border-[#1f1f1f] pl-2.5 text-left text-xs font-normal">Viewer</th>
                <th />
              </tr>
            </thead>
            <tbody>
              {viewer.map((v, i) => (
                <tr key={i} className="h-[22px] odd:bg-[#282828]">
                  <td className="border-r border-[#222] bg-[#303030] pr-1.5 text-right">{i}</td>
                  <td className="border-r border-[#222] pr-1.5 text-right">{v}</td>
                  <td />
                </tr>
              ))}
            </tbody>
          </table>
          <div className="absolute top-[18px] right-0 rotate-180 text-[#aaa]"><Arrow /></div>
          <div className="absolute top-8 right-0 h-6 w-1 rounded bg-[#444]" />
        </div>
      </div>
      <footer className="flex h-[27px] shrink-0 items-center justify-end gap-2.5 pr-2.5">
        <span>行: 328</span>
        <span>|</span>
        <span>列: 1</span>
      </footer>
    </section>
  );
}

/* ---------- node editors ---------- */

const INT = "#598c5c";
const FLOAT = "#a1a1a1";
const VEC = "#6363c7";
const GEO = "#1fd6a0";
const BOOL = "#cca6b6";

type Row = {
  kind: "out" | "in" | "sel" | "field" | "num" | "check";
  text: string;
  value?: string;
  color?: string;
};

type NodeDef = { id: string; x: number; y: number; title: string; head: string; rows: Row[]; w?: number; selected?: boolean; time?: string; eye?: boolean };

const RED = "bg-[#83264d]";
const BLUE = "bg-[#246283]";

// canvas origin of the node tree
const OX = 171;
const OY = 512;

const nodes: NodeDef[] = [
  {
    id: "vec", x: 301, y: 499, title: "", head: BLUE,
    rows: [{ kind: "out", text: "值", color: FLOAT }, { kind: "sel", text: "点积" }, { kind: "in", text: "矢量", color: VEC }, { kind: "in", text: "矢量", color: VEC }],
  },
  { id: "normal", x: 182, y: 574, title: "法向", head: RED, rows: [{ kind: "out", text: "法向", color: VEC }] },
  {
    id: "cmp0", x: 511, y: 483, title: "", head: BLUE,
    rows: [{ kind: "out", text: "", color: FLOAT }, { kind: "sel", text: "浮点" }, { kind: "sel", text: "小于或等于" }, { kind: "in", text: "A", color: FLOAT }, { kind: "field", text: "B", value: "-0.020", color: FLOAT }],
  },
  { id: "neigh", x: 303, y: 654, w: 99, title: "面的邻项", head: RED, rows: [{ kind: "out", text: "顶点数量", color: INT }, { kind: "out", text: "面数量", color: INT }] },
  {
    id: "cmp1", x: 500, y: 659, title: "小于或等于", head: BLUE, selected: true,
    rows: [{ kind: "out", text: "结果", color: BOOL }, { kind: "sel", text: "整数" }, { kind: "sel", text: "小于或等于" }, { kind: "field", text: "A", value: "0", color: INT }, { kind: "field", text: "B", value: "2", color: INT }],
  },
  { id: "island", x: 191, y: 752, title: "网格孤岛", head: RED, rows: [{ kind: "out", text: "孤岛编号", color: INT }, { kind: "out", text: "孤岛数量", color: INT }] },
  {
    id: "accum", x: 343, y: 749, title: "累积场", head: BLUE,
    rows: [
      { kind: "out", text: "首", color: INT }, { kind: "out", text: "尾", color: INT }, { kind: "out", text: "总数", color: INT },
      { kind: "sel", text: "整数" }, { kind: "sel", text: "面" },
      { kind: "field", text: "值", value: "1", color: INT }, { kind: "in", text: "群组 ID", color: INT },
    ],
  },
  { id: "group", x: 177, y: 864, title: "组输入", head: "bg-[#1d1d1d]", rows: [{ kind: "out", text: "悬窗数量", color: INT }, { kind: "out", text: "悬窗间隔", color: INT }] },
  {
    id: "cmp2", x: 526, y: 769, title: "小于或等于", head: BLUE,
    rows: [{ kind: "out", text: "结果", color: BOOL }, { kind: "sel", text: "整数" }, { kind: "sel", text: "小于或等于" }, { kind: "in", text: "A", color: INT }, { kind: "in", text: "B", color: INT }],
  },
  {
    id: "mod", x: 506, y: 890, title: "截断取模", head: BLUE,
    rows: [{ kind: "out", text: "值", color: FLOAT }, { kind: "sel", text: "截断取模" }, { kind: "check", text: "钳制" }, { kind: "in", text: "值", color: FLOAT }, { kind: "field", text: "值", value: "3.000", color: FLOAT }],
  },
  {
    id: "eq", x: 625, y: 883, title: "等于", head: BLUE,
    rows: [{ kind: "out", text: "结果", color: BOOL }, { kind: "sel", text: "浮点" }, { kind: "sel", text: "等于" }, { kind: "in", text: "A", color: FLOAT }, { kind: "field", text: "B", value: "0.000", color: FLOAT }, { kind: "field", text: "Epsilon", value: "0.001", color: FLOAT }],
  },
  {
    id: "viewer", x: 738, y: 659, title: "预览器", head: "bg-[#3c1a2a]", eye: true,
    rows: [{ kind: "sel", text: "自动" }, { kind: "in", text: "几何数据", color: GEO }, { kind: "in", text: "值", color: INT }],
  },
  {
    id: "sep", x: 936, y: 730, title: "分离几何体", head: "bg-[#1f7d5c]", time: "0.27 ms",
    rows: [{ kind: "out", text: "选中项", color: GEO }, { kind: "out", text: "反相", color: GEO }, { kind: "sel", text: "面" }, { kind: "in", text: "几何数据", color: GEO }, { kind: "in", text: "选中项", color: BOOL }],
  },
  { id: "value", x: 854, y: 960, title: "值", head: RED, rows: [{ kind: "out", text: "值", color: FLOAT }, { kind: "num", text: "值", value: "0.090" }] },
  { id: "add", x: 1011, y: 988, title: "相加", head: BLUE, w: 41, rows: [{ kind: "out", text: "", color: "transparent" }, { kind: "out", text: "", color: "transparent" }] },
];

function Socket({ color, side }: { color?: string; side: "l" | "r" }) {
  const round = color === GEO;
  return (
    <span
      className={`absolute top-1/2 size-[5px] -translate-y-1/2 ${round ? "rounded-full" : "rotate-45"} ${side === "l" ? "-left-[3px]" : "-right-[3px]"}`}
      style={{ background: color }}
    />
  );
}

function NodeRow({ row }: { row: Row }) {
  switch (row.kind) {
    case "out":
      return (
        <div className="relative flex h-[15px] items-center justify-end pr-2">
          {row.text}
          <Socket color={row.color} side="r" />
        </div>
      );
    case "in":
      return (
        <div className="relative flex h-[15px] items-center pl-2">
          {row.text}
          <Socket color={row.color} side="l" />
        </div>
      );
    case "sel":
      return (
        <label className="mx-2 my-0.5 flex h-[13px] items-center rounded-sm border border-[#3a3a3a] bg-[#262626] px-1">
          <select aria-label={row.text} className="min-w-0 flex-1 appearance-none bg-transparent outline-none">
            <option>{row.text}</option>
          </select>
          <Chev className="size-1.5" />
        </label>
      );
    case "check":
      return (
        <label className="flex h-[17px] items-center gap-1 pl-2">
          <input type="checkbox" className="size-2 appearance-none rounded-[2px] bg-[#545454]" />
          {row.text}
        </label>
      );
    case "num":
      return <input aria-label={row.text} defaultValue={row.value} className="mx-2 my-[3px] block h-[11px] w-[77px] rounded-sm bg-[#545454] text-center outline-none" />;
    case "field":
      return (
        <div className="relative flex h-[15px] items-center">
          <label className="mx-2 flex h-3 min-w-0 flex-1 items-center rounded-sm bg-[#545454] px-2">
            {row.text}
            <input defaultValue={row.value} className="w-0 min-w-0 flex-1 bg-transparent text-right outline-none" />
          </label>
          <Socket color={row.color} side="l" />
        </div>
      );
  }
}

function NodeBox({ n }: { n: NodeDef }) {
  return (
    <div
      className={`absolute rounded-[3px] bg-[#303030] pb-1 shadow-[0_1px_5px_2px_rgba(0,0,0,0.45)] ${n.selected ? "outline outline-white" : ""}`}
      style={{ left: n.x - OX, top: n.y - OY, width: n.w ?? 93 }}
    >
      {n.time && (
        <div className="absolute bottom-full left-0 flex h-[13px] w-full items-center gap-1 bg-[#262626] px-1">
          <Timer className="size-2.5" />
          {n.time}
        </div>
      )}
      <div className={`mb-0.5 flex h-[13px] items-center gap-1.5 rounded-t-[3px] px-1.5 ${n.head}`}>
        <Chev className="size-1.5" />
        {n.title}
        {n.eye && <FaEye className="ml-auto size-2.5" />}
      </div>
      {n.rows.map((r, i) => (
        <NodeRow key={i} row={r} />
      ))}
    </div>
  );
}

function Links() {
  return (
    <svg className="absolute inset-0 size-full" fill="none">
      <g transform={`translate(${-OX} ${-OY})`}>
        <g stroke="#2bd6a0" strokeWidth="2">
          <path d="M744 510 761 660M828 720 936 800M1021 820 990 1028M1029 752 1050 747" />
        </g>
        <path d="M436 771 738 713" stroke="#d8d8d8" />
        <path d="M436 771 526 840M436 771 506 961M284 774 343 864M270 887 526 855" stroke="#5d7a5f" />
        <path d="M599 913 625 955M394 521 511 554M171 520 184 512" stroke="#8b8b8b" />
        <path d="M619 791 936 814" stroke="#8e7f88" />
        <path d="M274 598 301 569M287 512 301 554" stroke="#5a5a86" />
        <circle cx="1050" cy="747" r="2.500" fill="#2bd6a0" />
        <circle cx="172" cy="518" r="2.500" fill="#777" />
      </g>
    </svg>
  );
}

function ShaderEditor() {
  return (
    <section className="flex w-[169px] shrink-0 flex-col overflow-hidden rounded-md border border-[#2d2d2d] bg-[#1c1c1c]">
      <div className="flex h-[26px] shrink-0 items-center gap-2 overflow-hidden pl-2 whitespace-nowrap">
        <Drop label="编辑器类型"><Ic n="sphere" /></Drop>
        <Pick label="着色类型" value="物体" className="w-[92px]"><Ic n="object" className="mr-1 size-4" /></Pick>
        <span className="ml-1">视图</span>
      </div>
      <div className="flex items-center gap-2 pt-4 text-[13px]">
        <Arrow />
        <Ic n="object" className="mx-1 size-4" />
        <span>Pl</span>
        <Arrow />
        <Ic n="mesh" className="-ml-1 size-4" />
        <span className="-mr-2 ml-4"><Arrow /></span>
        <Ic n="material" />
        <span className="ml-auto rotate-180"><Arrow /></span>
      </div>
      <div className="mt-auto mb-0.5 ml-9 h-1 w-8 rounded bg-[#2e2e2e]" />
    </section>
  );
}

const sockets: [string, string][] = [
  ["几何数据", "bg-[#1fe6a0]"],
  ["悬窗类型", "bg-[#5f5f5f]"],
  ["开关", "bg-[#a6a6a6]"],
  ["左右墙壁", "bg-[#a6a6a6]"],
  ["上墙壁", "bg-[#a6a6a6]"],
  ["下墙壁", "bg-[#a6a6a6]"],
  ["玻璃长度", "bg-[#5f5f5f]"],
  ["玻璃长度", "bg-[#a6a6a6]"],
  ["边框半径", "bg-[#a6a6a6]"],
  ["边框厚度", "bg-[#a6a6a6]"],
  ["玻璃厚度", "bg-[#a6a6a6]"],
  ["玻璃颜色", "bg-[#c7d62f]"],
  ["玻璃边框颜色", "bg-[#c7d62f]"],
  ["悬窗数量", "bg-[#598c6c]"],
];

function GroupPanel() {
  return (
    <aside className="relative flex w-[380px] shrink-0 flex-col bg-[#3a3a3a] pl-2.5 text-[#cfcfcf]">
      <div className="flex h-[34px] items-center pr-2">
        <button className="-ml-0.5 flex items-center gap-1.5 text-[#e6e6e6]"><Chev className="size-3" />群组接口</button>
        <span className="ml-auto"><DotGrip /></span>
      </div>
      <div className="mt-[5px] flex min-h-0 flex-1 gap-2">
        <ul className="w-[332px] overflow-hidden rounded-t bg-[#2c2c2c] px-1 pt-[3px]">
          <li className="flex h-6 items-center justify-between pr-[22px] pl-[42px]">
            几何数据
            <span className="size-2 rounded-full bg-[#1fe6a0]" />
          </li>
          {sockets.map(([name, c], i) => (
            <li key={i} className="flex h-6 items-center gap-2 pl-[26px]">
              <span className={`size-2 rounded-full ${c}`} />
              {name}
            </li>
          ))}
          <li>
            <button className="flex h-6 items-center gap-1 pl-1"><Chev className="size-3" />悬窗</button>
            <ul className="relative">
              <li className="flex h-6 items-center">
                <span className="mr-2.5 flex h-[19px] flex-1 items-center gap-2 rounded bg-[#4772b3] pl-[41px]">
                  <span className="size-2 rounded-full border border-[#1f3d2a] bg-[#4f9a58]" />
                  悬窗间隔
                </span>
              </li>
              <li className="flex h-6 items-center gap-2 pl-[41px]">
                <span className="size-2 rounded-full bg-[#a6a6a6]" />
                悬窗大小比例
              </li>
              <li className="absolute inset-y-0 left-3 w-px bg-[#555]" />
            </ul>
          </li>
        </ul>
        <div className="flex flex-col">
          <button aria-label="添加" className="grid h-5 w-5 place-items-center rounded-t bg-[#282828] text-white"><Plus className="size-3.5" /></button>
          <button aria-label="移除" className="mt-px grid h-5 w-5 place-items-center rounded-b bg-[#545454]"><Minus className="size-3.5" /></button>
          <button aria-label="更多" className="mt-2 grid h-5 w-5 place-items-center rounded bg-[#282828]"><Chev className="size-2.5" /></button>
        </div>
      </div>
    </aside>
  );
}

function GeometryEditor() {
  return (
    <section className="flex min-w-0 flex-1 flex-col overflow-hidden rounded-md border border-[#2d2d2d] bg-[#1c1c1c]">
      <div className="flex h-[26px] shrink-0 items-center pr-2.5 pl-1.5">
        <Drop label="编辑器类型"><Ic n="geonodes" /></Drop>
        <Pick label="节点树类型" value="修改器" className="mr-3 ml-2 w-[74px]" />
        <Menus items={["视图", "选择", "添加", "节点"]} />
        <div className="ml-[243px] flex items-center rounded bg-[#1d1d1d]">
          <Drop label="浏览节点树"><Ic n="nodetree" /></Drop>
          <input aria-label="节点树" defaultValue="办公楼-0.3-参数" className="w-[110px] bg-transparent pl-2 text-[13px] outline-none" />
          <div className="flex gap-px">
            <Btn label="伪用户" dim><Shield className="size-4" /></Btn>
            <Btn label="新建"><Ic n="dupe" /></Btn>
            <Btn label="断开"><X className="size-3.5" /></Btn>
          </div>
          <Pin className="ml-2.5 size-4 rotate-45 text-[#8a8a8a]" />
        </div>
        <div className="ml-auto flex items-center gap-1.5">
          <Btn label="上一级"><Ic n="parent" /></Btn>
          <span className="ml-0.5"><Btn label="吸附" dim><Ic n="magnet" /></Btn></span>
          <div className="flex items-center gap-1.5 pr-1"><Btn label="叠加层" on><Ic n="overlay" /></Btn><Chev /></div>
        </div>
      </div>
      <div className="flex min-h-0 flex-1">
        <div className="relative min-w-0 flex-1 overflow-hidden bg-[#232323] text-[7px] leading-none">
          <Links />
          {nodes.map((n) => (
            <NodeBox key={n.id} n={n} />
          ))}
          <div className="absolute top-4 left-0 flex h-4 items-center text-[13px] whitespace-nowrap">
            <Arrow />
            <Ic n="object" className="mx-2.5 size-4" />
            Plane.016
            <span className="mr-2 ml-[18px]"><Arrow /></span>
            <Ic n="geonodes" className="mr-2 size-[18px]" />
            <span className="text-xs">GeometryNodes</span>
            <span className="mr-2 ml-5"><Arrow /></span>
            <Ic n="nodetree" className="mr-2 size-[18px]" />
            办公楼-0.3-参数
            <span className="mr-2 ml-3.5"><Arrow /></span>
            <Ic n="nodetree" className="size-[18px]" />
            <sub className="mr-1 text-[10px]">4</sub>
            <span className="text-xs">悬窗-0.4</span>
          </div>
          <svg viewBox="0 0 18 18" className="absolute top-[120px] left-[357px] size-[18px]" fill="#fff" stroke="#111" strokeWidth=".6">
            <path d="M9 0l4 5-2 1-2-2-2 2-2-1zM9 18l4-5-2-1-2 2-2-2-2 1zM0 9l5-4 1 2-2 2 2 2-1 2zM18 9l-5-4-1 2 2 2-2 2 1 2z" />
          </svg>
          <div className="absolute bottom-0.5 left-[157px] h-1 w-32 rounded bg-[#3c3c3c]" />
          <div className="absolute top-[178px] right-2 h-[115px] w-1 rounded bg-[#333]" />
        </div>
        <GroupPanel />
        <div className="w-2 shrink-0 bg-[#303030]">
          <div className="mx-auto h-64 w-1 rounded bg-[#444]" />
        </div>
        <nav className="flex w-[22px] shrink-0 flex-col gap-1 bg-[#1a1a1a] pt-1 text-[12px] text-[#b8b8b8]">
          {["群组", "节点", "工具", "视图", "节点树仓库", "节点牧人"].map((t, i) => (
            <button
              key={t}
              className={`flex w-5 shrink-0 items-center justify-center rounded-r border border-[#3a3a3a] pt-2 pb-2 whitespace-nowrap [writing-mode:vertical-rl] ${i === 0 ? "bg-[#303030] text-white" : "bg-[#202020]"}`}
            >
              {t}
            </button>
          ))}
        </nav>
      </div>
    </section>
  );
}

function KeyCast() {
  return (
    <div className="pointer-events-none absolute bottom-[69px] left-[34px] flex flex-col text-[20px] leading-6 whitespace-nowrap text-white">
      <span>Left Mouse x2</span>
      <span>Shift + D</span>
      <svg viewBox="0 0 34 44" className="mt-2 h-11 w-[34px]" fill="none" stroke="#fff" strokeWidth="1.6">
        <path d="M1 10Q1 1 9 1H25Q33 1 33 10V27Q33 43 17 43T1 27zM1 22H33M12 1V22M22 1V22" />
      </svg>
      <span className="mt-2.5 mb-2 h-0.5 w-[103px] bg-white" />
      <span>选择 ('node.select')</span>
    </div>
  );
}

/* ---------- timeline ---------- */

function Timeline() {
  return (
    <section className="flex h-[26px] shrink-0 items-center rounded-md bg-[#303030] pr-5 pl-3">
      <div className="flex items-center gap-1 rounded pr-4"><Ic n="clock" /><Chev /></div>
      <nav className="flex items-center gap-[11px]">
        <button className="flex items-center gap-2">回放<Chev /></button>
        <button className="flex items-center gap-2">插帧<Chev /></button>
        <button className="ml-1">视图</button>
        <button className="ml-1.5">标记</button>
      </nav>
      <div className="mx-auto flex items-center pl-[250px]">
        <Btn label="自动插帧" dim>
          <svg viewBox="0 0 16 16" className="size-4" fill="none" stroke="currentColor" strokeWidth="1.500"><circle cx="8" cy="8" r="5" /></svg>
        </Btn>
        <Chev className="mr-3.5 ml-2 size-2 text-[#484848]" />
        <div className="flex gap-px text-[#e8e8e8]">
          {[
            ["首帧", "M1 2h1.500v12H1zM14 3v10L5 8z"],
            ["上一关键帧", "M5 3l5 5-5 5-5-5zM16 4v8l-5-4z"],
            ["倒放", "M14 1v14L2 8z"],
            ["播放", "M2 1v14l12-7z"],
            ["下一关键帧", "M11 3l5 5-5 5-5-5zM0 4v8l5-4z"],
            ["末帧", "M13.500 2H15v12h-1.500zM2 3v10l9-5z"],
          ].map(([label, d]) => (
            <button key={label} aria-label={label} className="grid h-5 w-[21px] place-items-center bg-[#424242]">
              <svg viewBox="0 0 16 16" className="size-4" fill="currentColor"><path d={d} /></svg>
            </button>
          ))}
        </div>
      </div>
      <div className="flex items-center gap-[7px] text-[13px]">
        <input aria-label="当前帧" defaultValue="1" className="h-5 w-20 rounded bg-[#545454] text-center outline-none" />
        <div className="flex items-center gap-px">
          <Btn label="预览范围"><Timer className="size-4" /></Btn>
          <label className="flex h-5 w-[94px] items-center bg-[#545454] px-4 text-xs">
            起始<input defaultValue="1" className="w-0 min-w-0 flex-1 bg-transparent text-right text-[13px] outline-none" />
          </label>
          <label className="flex h-5 w-[94px] items-center rounded-r bg-[#545454] px-4 text-xs">
            结束<input defaultValue="250" className="w-0 min-w-0 flex-1 bg-transparent text-right text-[13px] outline-none" />
          </label>
        </div>
        <input aria-label="帧步长" defaultValue="1" className="h-5 w-[86px] rounded bg-[#545454] text-center outline-none" />
        <button className="h-5 w-9 rounded bg-[#484848]">[</button>
        <button className="h-5 w-9 rounded bg-[#484848]">]</button>
      </div>
    </section>
  );
}

/* ---------- outliner + properties ---------- */

function SearchBox({ id, className }: { id: string; className: string }) {
  return (
    <label htmlFor={id} className={`flex h-[21px] items-center gap-2 rounded bg-[#1d1d1d] px-1 ${className}`}>
      <Search className="size-4 -scale-x-100" />
      <input id={id} placeholder="搜索" className="w-0 min-w-0 flex-1 bg-transparent outline-none placeholder:text-[#6a6a6a]" />
    </label>
  );
}

function Outliner() {
  return (
    <section className="flex grow-[381] basis-0 flex-col overflow-hidden rounded-md bg-[#282828]">
      <div className="flex h-7 shrink-0 items-center pr-2 pl-2.5">
        <Drop label="编辑器类型"><Ic n="outliner" /></Drop>
        <span className="ml-2.5"><Drop label="显示模式"><Ic n="viewlayer" /></Drop></span>
        <SearchBox id="outliner-search" className="mr-25 ml-auto w-[127px]" />
        <Drop label="过滤"><Ic n="filter" /></Drop>
        <span className="ml-2"><Btn label="新建集合"><Ic n="newcol" /></Btn></span>
      </div>
      <ul className="text-[#cfcfcf]">
        <li className="flex h-[22px] items-center gap-2 pl-6"><Ic n="collection" />场景集合</li>
        <li className="flex h-[22px] items-center gap-1.5 bg-[#2c2c2c] pr-2.5 pl-7">
          <Arrow />
          <span className="ml-0.5 rounded bg-[#444] p-0.5"><Ic n="collection" /></span>
          <span className="font-medium text-white">单体</span>
          <span className="relative ml-4 rounded bg-[#3f4347] px-0.5 text-[#d68a4e]">
            <Ic n="mesh" className="my-0.5 size-4" />
            <span className="absolute -right-1 bottom-0 text-[10px] leading-none text-white">20</span>
          </span>
          <Ic n="bulb" className="size-4 text-[#d68a4e]" />
          <input type="checkbox" aria-label="启用集合" defaultChecked className="ml-auto size-3 accent-[#e6e6e6]" />
          <button aria-label="隐藏" className="ml-0.5"><FaEye className="size-4" /></button>
          <button aria-label="渲染可见性"><FaCamera className="size-4" /></button>
        </li>
        <li className="flex h-[22px] items-center gap-1.5 pr-2.5 pl-7">
          <Arrow />
          <Ic n="moviecam" className="mr-0.5 ml-0.5 size-[18px] text-[#d68a4e]" />
          <span>Camera</span>
          <span className="ml-4 rounded bg-[#3e4a45] px-0.5 text-[#2bd69a]"><Ic n="camera" className="my-0.5 size-[18px]" /></span>
          <button aria-label="隐藏" className="ml-auto"><FaEye className="size-4" /></button>
          <button aria-label="渲染可见性"><FaCamera className="size-4" /></button>
        </li>
      </ul>
    </section>
  );
}

const propTabs: [string, string, string][] = [
  ["tool", "text-[#bdbdbd]", "mb-[7px]"],
  ["renderprops", "text-[#bdbdbd]", ""],
  ["output", "text-[#bdbdbd]", ""],
  ["viewlayer", "text-[#bdbdbd]", ""],
  ["scene", "text-[#bdbdbd]", ""],
  ["world", "text-[#b8405f]", "mb-2"],
  ["collectionLine", "text-[#d8d8d8]", "mb-2"],
  ["object", "text-[#d68a4e]", ""],
  ["wrench", "text-[#7f9fe8]", ""],
  ["particles", "text-[#6d86d6]", ""],
  ["physics", "text-[#7d92de]", ""],
  ["constraint", "text-[#7fa6e8]", ""],
  ["mesh", "text-[#2bd69a]", ""],
  ["material", "text-[#d0435f]", ""],
];

type Prop = { name: string; value: string; tone?: "blue" | "white" | "mint" | "menu"; noAttr?: boolean };

const props: Prop[] = [
  { name: "全局随机种", value: "69" },
  { name: "楼层数", value: "5", noAttr: true },
  { name: "楼层高度", value: "3.000" },
  { name: "地板厚度", value: "0.200" },
  { name: "分组单位", value: "6" },
  { name: "拐角拆分", value: "不拆分拐角", tone: "menu" },
  { name: "悬窗占比", value: "1.000", tone: "blue" },
  { name: "墙壁随机种", value: "12" },
  { name: "外墙概率", value: "0.000" },
  { name: "墙面长度", value: "1 m" },
  { name: "墙壁厚度", value: "0.330" },
  { name: "外墙壁", value: "#ffffff", tone: "white" },
  { name: "地板颜色", value: "#dfe5e4", tone: "mint" },
];

const floorProps: Prop[] = [
  { name: "一楼样式随机种", value: "31" },
  { name: "一楼高度", value: "5.000" },
  { name: "一楼外墙高度", value: "0.810" },
];

function PropRow({ p }: { p: Prop }) {
  const box = "h-5 min-w-0 flex-1 rounded-[3px]";
  return (
    <div className="flex h-[27px] items-center">
      <label htmlFor={p.name} className={`box-content w-[146px] shrink-0 pr-2.5 text-right whitespace-nowrap ${p.tone === "menu" ? "text-[#808080]" : ""}`}>
        {p.name}
      </label>
      {p.tone === "menu" ? (
        <select id={p.name} disabled className={`${box} appearance-none bg-[#333] px-2 text-[#808080]`}>
          <option>{p.value}</option>
        </select>
      ) : p.tone === "white" ? (
        <button id={p.name} aria-label={p.value} className={`${box} bg-white`} />
      ) : p.tone === "mint" ? (
        <button id={p.name} aria-label={p.value} className={`${box} bg-[#dfe5e4]`} />
      ) : (
        <input
          id={p.name}
          defaultValue={p.value}
          className={`${box} text-center text-[13px] outline-none ${p.tone === "blue" ? "bg-[#4772b3] text-white" : "bg-[#545454]"}`}
        />
      )}
      <span className="ml-0.5 grid w-5 shrink-0 place-items-center">
        {!p.noAttr && p.tone !== "menu" && (
          <button aria-label="输入属性" className="bg-[#484848]"><Ic n="sheet" className="block size-[18px]" /></button>
        )}
      </span>
      <span className={`mr-4 ml-2.5 size-1 shrink-0 rounded-full ${p.tone === "menu" ? "bg-[#555]" : "bg-[#eee]"}`} />
    </div>
  );
}

function Properties() {
  return (
    <section className="flex min-h-0 grow-[617] basis-0 flex-col overflow-hidden rounded-md bg-[#303030]">
      <div className="flex h-[26px] shrink-0 items-center pr-1.5 pl-2.5">
        <Drop label="编辑器类型"><Ic n="props" /></Drop>
        <div className="flex flex-1 justify-center pr-2">
          <SearchBox id="props-search" className="w-[126px]" />
        </div>
        <button aria-label="选项" className="grid size-5 place-items-center rounded bg-[#232323]"><Chev /></button>
      </div>
      <div className="flex min-h-0 flex-1">
        <nav className="flex w-[31px] shrink-0 flex-col items-center bg-[#1d1d1d] pt-[9px] pl-0.5">
          {propTabs.map(([icon, tone, gap]) => (
            <button key={icon} aria-label={icon} className={`grid h-[30px] w-full shrink-0 place-items-center rounded-l ${tone} ${gap} ${icon === "wrench" ? "bg-[#303030]" : ""}`}>
              {icon === "wrench" ? <FaWrench className="size-4" /> : <Ic n={icon} className="size-[17px]" />}
            </button>
          ))}
        </nav>
        <div className="flex min-w-0 flex-1 flex-col overflow-hidden pr-2 pl-2">
          <div className="flex h-[38px] shrink-0 items-center gap-2.5 text-[13px]">
            <Ic n="object" className="ml-0.5 size-4" />
            Plane.016
            <span className="mx-1.5"><Arrow /></span>
            <Ic n="geonodes" />
            <span className="text-xs">GeometryNodes</span>
            <Pin className="ml-auto size-4 rotate-45 text-[#999]" />
          </div>
          <button className="mt-2.5 flex h-5 shrink-0 items-center rounded bg-[#545454] pl-1.5">
            <Plus className="size-3.5" />
            <span className="flex-1 text-center">添加修改器</span>
          </button>
          <div className="mt-2.5 min-h-0 flex-1 overflow-hidden rounded-t border border-b-0 border-[#4a5f8c] bg-[#3b3b3b]">
            <div className="flex h-[25px] items-center pl-1.5">
              <Chev className="size-3" />
              <Ic n="geonodes" className="mr-2.5 ml-1.5 size-4" />
              <input aria-label="修改器名称" defaultValue="GeometryNodes" className="h-5 min-w-0 flex-1 rounded-l bg-[#1d1d1d] px-2 outline-none" />
              <div className="flex items-center gap-px">
                <Btn label="应用于样条"><Ic n="mesh" /></Btn>
                <Btn label="编辑模式" on><Ic n="cage" /></Btn>
                <Btn label="实时" on><Ic n="monitor" /></Btn>
                <Btn label="渲染" on><FaCamera className="size-3.5" /></Btn>
                <button aria-label="更多" className="grid h-5 w-5 place-items-center rounded-r bg-[#282828]"><Chev className="size-2.5" /></button>
              </div>
              <button aria-label="移除" className="mx-1"><X className="size-4" /></button>
              <span className="mr-1.5 ml-3"><DotGrip /></span>
            </div>
            <div className="flex h-10 items-center px-2.5 text-[13px]">
              <Drop label="浏览节点树"><Ic n="nodetree" /></Drop>
              <input aria-label="节点组" defaultValue="办公楼-0.3-参数" className="h-5 min-w-0 flex-1 bg-[#1d1d1d] px-2 outline-none" />
              <div className="flex gap-px">
                <Btn label="伪用户" dim><Shield className="size-4" /></Btn>
                <Btn label="新建"><Ic n="dupe" /></Btn>
                <Btn label="断开"><X className="size-3.5" /></Btn>
              </div>
            </div>
            <div className="-mt-1.5">
              {props.map((p) => (
                <PropRow key={p.name} p={p} />
              ))}
            </div>
            <button className="flex h-[27px] items-center gap-1.5 pl-3"><Chev className="size-3" />一楼</button>
            <div className="bg-[#343434] pt-1">
              {floorProps.map((p) => (
                <PropRow key={p.name} p={p} />
              ))}
            </div>
          </div>
        </div>
      </div>
    </section>
  );
}

/* ---------- status bar ---------- */

function Key({ children }: { children: string }) {
  return <kbd className="min-w-[18px] rounded border border-[#777] px-[3px] text-center font-[inherit] text-xs leading-4">{children}</kbd>;
}

function Mouse({ part }: { part: "l" | "r" | "m" }) {
  const fill = { l: "M1 7V4q0-3 3-3h3v6z", r: "M7 1h3q3 0 3 3v3H7z", m: "M5 2h4v6H5z" }[part];
  return (
    <svg viewBox="0 0 14 18" className="h-[18px] w-3.5" fill="none" stroke="#777">
      <rect x="1" y="1" width="12" height="16" rx="3" />
      <path d={fill} fill="#aaa" stroke="none" />
    </svg>
  );
}

function Shift() {
  return (
    <svg viewBox="0 0 18 16" className="h-4 w-[18px]" fill="none" stroke="#888" strokeWidth="1.300">
      <path d="M9 1 17 9H13.500V15H4.500V9H1z" />
    </svg>
  );
}

function TabKey() {
  return (
    <svg viewBox="0 0 18 18" className="size-[18px]" fill="none" stroke="#888">
      <rect x=".5" y=".5" width="17" height="17" rx="3" />
      <path d="M4 4v4M4 6h10M6.500 4l-2 2 2 2M14 10v4M4 12h10M11.500 10l2 2-2 2" />
    </svg>
  );
}

function StatusBar() {
  const item = "flex items-center gap-1";
  return (
    <footer className="relative flex h-[25px] shrink-0 items-center gap-2.5 pr-3.5 pl-2.5 whitespace-nowrap text-[#999]">
      <span className={item}><Mouse part="l" />确认</span>
      <span className={item}><Mouse part="r" />取消</span>
      <span className={item}><Key>X</Key><Key>Y</Key><Key>Z</Key>轴向</span>
      <span className={item}><Key>Ctrl</Key>吸附反转</span>
      <span className={item}><Shift /><TabKey />吸附开关</span>
      <span className={item}><Key>T</Key>为节点自动偏移切换方向</span>
      <span className={item}><Key>Alt</Key>节点附加(关闭)</span>
      <span className={item}><Key>R</Key>旋转</span>
      <span className={item}><Key>S</Key>调整大小</span>
      <span className={item}><Mouse part="m" />自动约束</span>
      <span className={item}><Shift />精确模式</span>
      <span className="ml-auto">内存: 317.8 MIB | 显存: 2.9/4.0 GIB | 4.4.3</span>
      <span className="pointer-events-none absolute bottom-2 left-2.5 flex items-end gap-2 opacity-25">
        <svg viewBox="0 0 40 42" className="h-[42px] w-10"><path d="M6 0H34Q40 0 40 6V30Q40 36 34 36H20V42H6Q0 42 0 36V6Q0 0 6 0zM14 14V26H26V14z" fill="#fff" fillRule="evenodd" /></svg>
        <span className="text-[34px] leading-8 font-bold text-white">lafe.cc</span>
      </span>
    </footer>
  );
}

export default function App() {
  return (
    <div className="flex h-screen w-full flex-col overflow-hidden bg-[#181818] font-['Inter','Noto_Sans_CJK_SC',sans-serif] text-xs text-[#e0e0e0]">
      <TitleBar />
      <TopBar />
      <main className="flex min-h-0 flex-1 gap-[3px] pr-[3px]">
        <div className="flex min-w-0 flex-1 flex-col gap-[3px]">
          <div className="flex min-h-0 grow-[429] basis-0 gap-[3px]">
            <Viewport />
            <Spreadsheet />
          </div>
          <div className="relative flex min-h-0 grow-[540] basis-0 gap-px">
            <ShaderEditor />
            <GeometryEditor />
            <KeyCast />
          </div>
          <Timeline />
        </div>
        <div className="flex w-[443px] shrink-0 flex-col gap-[3px]">
          <Outliner />
          <Properties />
        </div>
      </main>
      <StatusBar />
    </div>
  );
}
